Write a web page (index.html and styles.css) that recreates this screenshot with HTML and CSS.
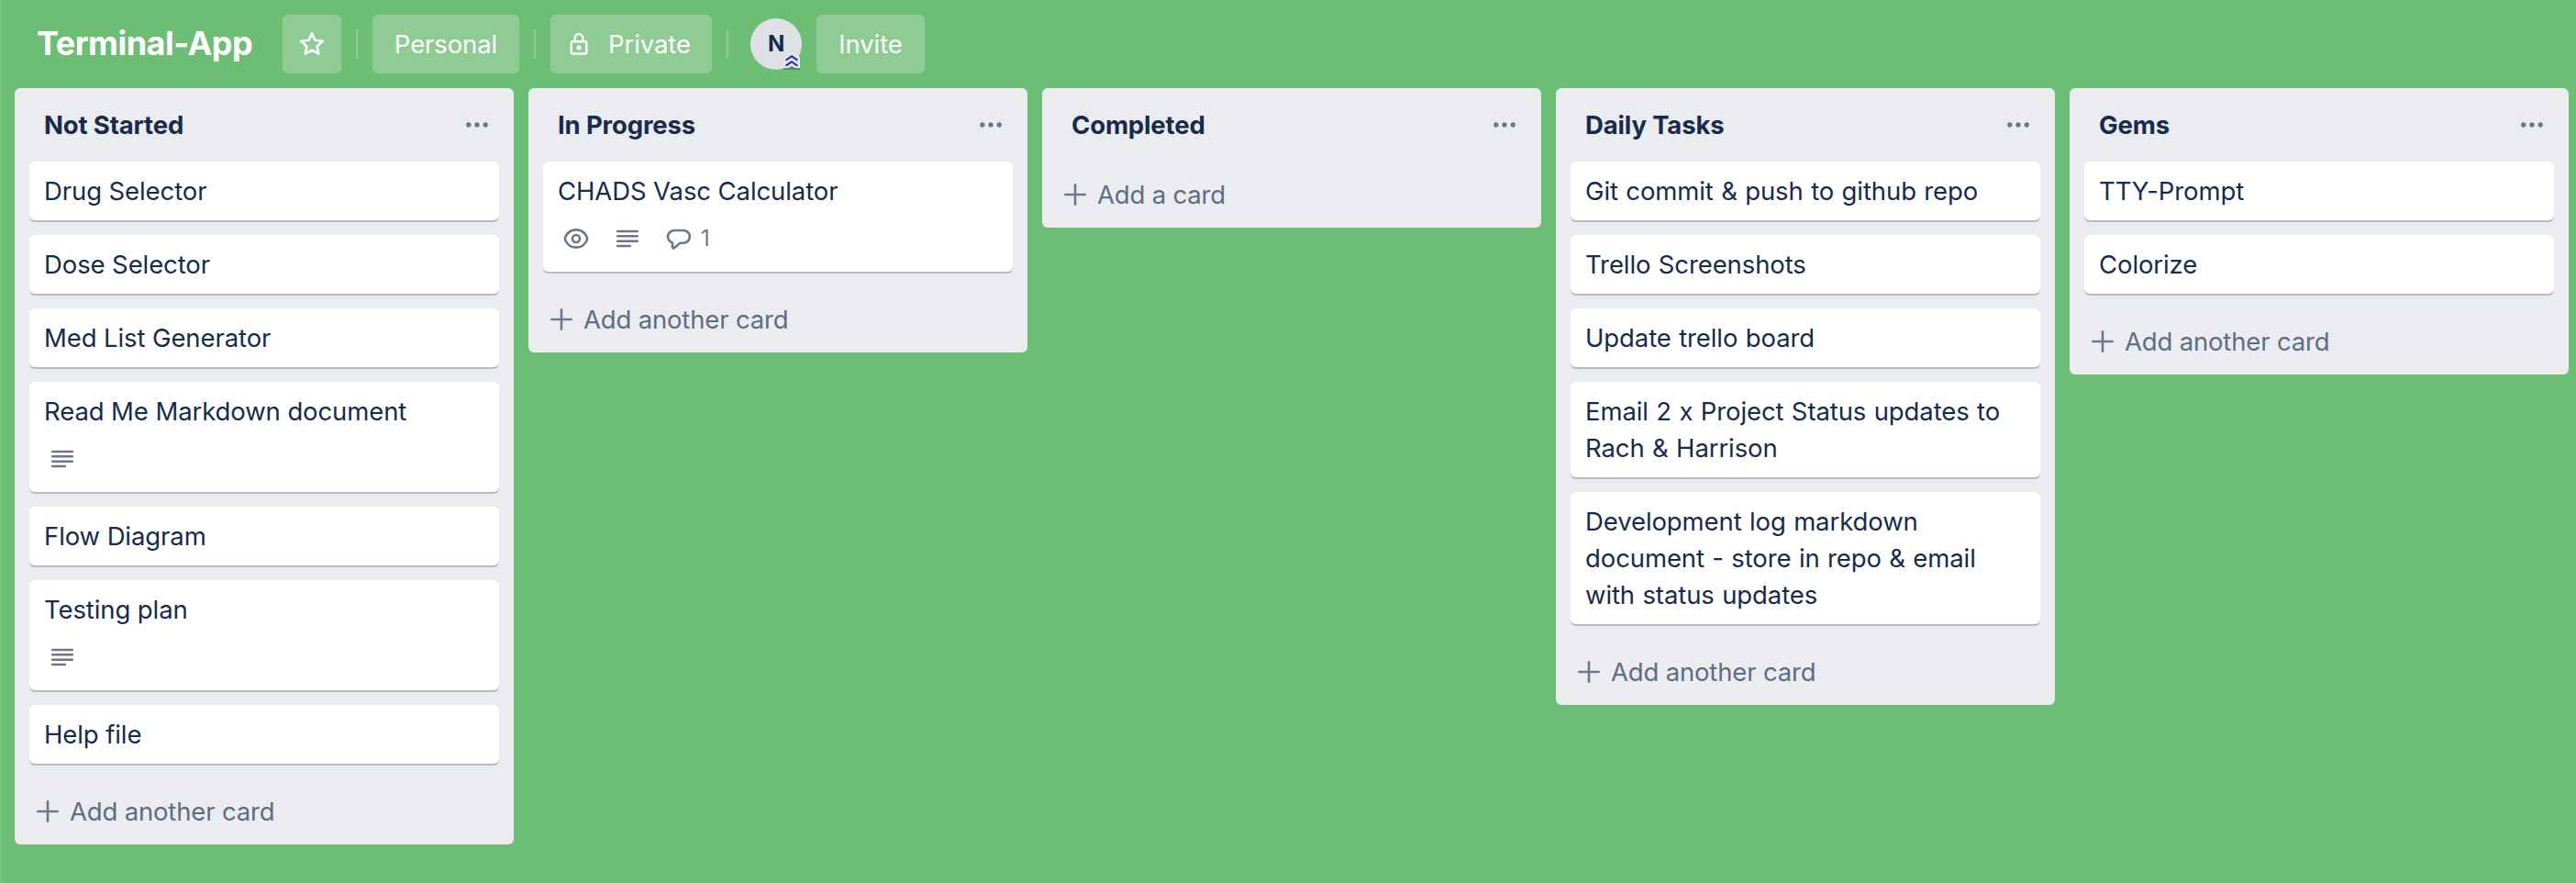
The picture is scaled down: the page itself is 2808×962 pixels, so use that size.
FILE: index.html
```html
<!DOCTYPE html>
<html lang="en">
<head>
<meta charset="utf-8">
<title>Terminal-App</title>
<link rel="stylesheet" href="styles.css">
</head>
<body>
<svg class="sprite" aria-hidden="true">
  <symbol id="i-dots" viewBox="0 0 32 32"><g fill="currentColor"><circle cx="6.8" cy="16" r="2.7"/><circle cx="16" cy="16" r="2.7"/><circle cx="25.2" cy="16" r="2.7"/></g></symbol>
  <symbol id="i-plus" viewBox="0 0 32 32"><path d="M16 5.3v21.4M5.3 16h21.4" fill="none" stroke="currentColor" stroke-width="2.6" stroke-linecap="round"/></symbol>
  <symbol id="i-desc" viewBox="0 0 32 32"><path d="M5.2 8h21.6M5.2 13.3h21.6M5.2 18.7h21.6M5.2 24h13.6" fill="none" stroke="currentColor" stroke-width="2.6" stroke-linecap="round"/></symbol>
  <symbol id="i-eye" viewBox="0 0 32 32"><g fill="none" stroke="currentColor" stroke-width="2.6"><path d="M16 6.400c5.600 0 9.500 3.200 11.600 7.600.6 1.400.6 2.600 0 4-2.100 4.400-6 7.600-11.600 7.600S6.500 22.400 4.400 18c-.6-1.400-.6-2.600 0-4C6.500 9.600 10.400 6.400 16 6.400z"/><circle cx="16" cy="16" r="4"/></g></symbol>
  <symbol id="i-comment" viewBox="0 0 32 32"><path d="M11.500 7h9.200a7.200 6.900 0 0 1 0 13.800h-3.400l-6.200 5.200c-1.100.9-2.100.4-2.100-.8v-4.800C6.200 19.200 4 16.900 4 14c0-3.900 3.400-7 7.500-7z" fill="none" stroke="currentColor" stroke-width="2.600" stroke-linejoin="round"/></symbol>
</svg>

<header class="bar">
  <h1 class="bar-title">Terminal-App</h1>
  <button class="btn btn-star" aria-label="Star"><svg class="icon" viewBox="0 0 32 32"><path d="M16 4.300l3.400 7.500 8.400 1-6.200 5.700 1.700 8.200-7.300-4.100-7.300 4.100 1.700-8.200-6.200-5.700 8.400-1z" fill="none" stroke="currentColor" stroke-width="2.600" stroke-linejoin="round"/></svg></button>
  <span class="sep"></span>
  <button class="btn btn-personal">Personal</button>
  <span class="sep"></span>
  <button class="btn btn-private"><svg class="icon" viewBox="0 0 32 32"><g fill="none" stroke="currentColor" stroke-width="2.400"><rect x="7.800" y="13.200" width="16.500" height="13.300" rx="1.800"/><path d="M11.700 13v-3.400a4.300 4.600 0 0 1 8.600 0V13"/></g><circle cx="16" cy="20" r="2.500" fill="currentColor"/></svg>Private</button>
  <span class="sep"></span>
  <div class="avatar">N<svg class="avatar-badge" viewBox="0 0 18 18"><path d="M0 18V6Q0 1 9 0q9 1 9 6v12z" fill="#e4e5ee"/><path d="M0 16.200h5L9 14l4 2.200h5V18H0z" fill="#4f8a58"/><path d="M2.600 7.700L9 3.300l6.400 4.400M2.600 13.700L9 9.300l6.400 4.400" fill="none" stroke="#332fa8" stroke-width="2.100"/></svg></div>
  <button class="btn btn-invite">Invite</button>
</header>

<main class="board">
  <section class="list">
    <div class="list-head"><h2>Not Started</h2><svg class="icon"><use href="#i-dots"/></svg></div>
    <article class="card">Drug Selector</article>
    <article class="card">Dose Selector</article>
    <article class="card">Med List Generator</article>
    <article class="card">Read Me Markdown document<div class="badges"><svg class="icon"><use href="#i-desc"/></svg></div></article>
    <article class="card">Flow Diagram</article>
    <article class="card">Testing plan<div class="badges"><svg class="icon"><use href="#i-desc"/></svg></div></article>
    <article class="card">Help file</article>
    <div class="add"><svg class="icon"><use href="#i-plus"/></svg>Add another card</div>
  </section>
  <section class="list">
    <div class="list-head"><h2>In Progress</h2><svg class="icon"><use href="#i-dots"/></svg></div>
    <article class="card">CHADS Vasc Calculator<div class="badges"><svg class="icon"><use href="#i-eye"/></svg><svg class="icon"><use href="#i-desc"/></svg><span class="count"><svg class="icon"><use href="#i-comment"/></svg>1</span></div></article>
    <div class="add"><svg class="icon"><use href="#i-plus"/></svg>Add another card</div>
  </section>
  <section class="list">
    <div class="list-head"><h2>Completed</h2><svg class="icon"><use href="#i-dots"/></svg></div>
    <div class="add"><svg class="icon"><use href="#i-plus"/></svg>Add a card</div>
  </section>
  <section class="list list-wordy">
    <div class="list-head"><h2>Daily Tasks</h2><svg class="icon"><use href="#i-dots"/></svg></div>
    <article class="card">Git commit &amp; push to github repo</article>
    <article class="card">Trello Screenshots</article>
    <article class="card">Update trello board</article>
    <article class="card">Email 2 x Project Status updates to Rach &amp; Harrison</article>
    <article class="card">Development log markdown document - store in repo &amp; email with status updates</article>
    <div class="add"><svg class="icon"><use href="#i-plus"/></svg>Add another card</div>
  </section>
  <section class="list">
    <div class="list-head"><h2>Gems</h2><svg class="icon"><use href="#i-dots"/></svg></div>
    <article class="card">TTY-Prompt</article>
    <article class="card">Colorize</article>
    <div class="add"><svg class="icon"><use href="#i-plus"/></svg>Add another card</div>
  </section>
</main>
</body>
</html>
```

FILE: styles.css
```css
* { box-sizing: border-box; }
body {
  margin: 0;
  height: 962px;
  overflow: hidden;
  background: #6dbd74;
  box-shadow: inset 1px 0 #7cc483;
  color: #172b4d;
  font: 27.5px/40px Inter, "Liberation Sans", sans-serif;
  letter-spacing: -0.1px;
}
h1, h2 { margin: 0; font: inherit; letter-spacing: inherit; }
.sprite { display: none; }
.icon { width: 32px; height: 32px; flex: none; display: block; }

.bar { display: flex; align-items: center; height: 96px; padding-left: 40px; color: #fff; }
.bar-title {
  width: 268px;
  padding-bottom: 2px;
  font-size: 36px;
  font-weight: 700;
  letter-spacing: -0.5px;
  white-space: nowrap;
}
.btn {
  display: flex;
  align-items: center;
  justify-content: center;
  height: 64px;
  padding: 0;
  border: 0;
  border-radius: 6px;
  background: #8fcc94;
  color: inherit;
  font: inherit;
  letter-spacing: -0.1px;
}
.btn-star { width: 64px; }
.btn-personal { width: 160px; }
.btn-private { width: 176px; gap: 16px; justify-content: flex-start; padding-left: 15px; }
.btn-invite { width: 118px; margin-left: 16px; }
.sep { width: 2px; height: 32px; margin: 0 16px; background: #8fcc94; }
.avatar {
  position: relative;
  width: 56px;
  height: 56px;
  margin-left: 8px;
  border-radius: 50%;
  background: #dfe1e6;
  color: #172b4d;
  font-size: 24px;
  font-weight: 700;
  line-height: 56px;
  text-align: center;
}
.avatar-badge { position: absolute; right: 2px; bottom: 0; width: 18px; height: 18px; }

.board { display: flex; align-items: flex-start; gap: 16px; padding-left: 16px; }
.list {
  display: flex;
  flex-direction: column;
  flex: none;
  width: 544px;
  padding: 0 16px;
  border-radius: 6px;
  background: #ebecf0;
}
.list-wordy .card { word-spacing: 0.8px; }
.list-head {
  display: flex;
  align-items: center;
  justify-content: space-between;
  height: 80px;
  padding: 0 8px 0 16px;
  color: #6b778c;
}
.list-head h2 { color: #172b4d; font-weight: 700; letter-spacing: -0.15px; }
.card {
  margin-bottom: 16px;
  padding: 12px 16px;
  border-radius: 6px;
  background: #fff;
  box-shadow: 0 2px 0 #b3bac9;
}
.badges { display: flex; gap: 24px; height: 56px; padding: 16px 0 0 4px; color: #6b778c; }
.count { display: flex; gap: 8px; font-size: 24px; line-height: 32px; }
.add {
  display: flex;
  align-items: center;
  gap: 8px;
  height: 72px;
  padding-left: 4px;
  color: #5e6c84;
  letter-spacing: -0.17px;
}
.add .icon { color: #6b778c; }
```
